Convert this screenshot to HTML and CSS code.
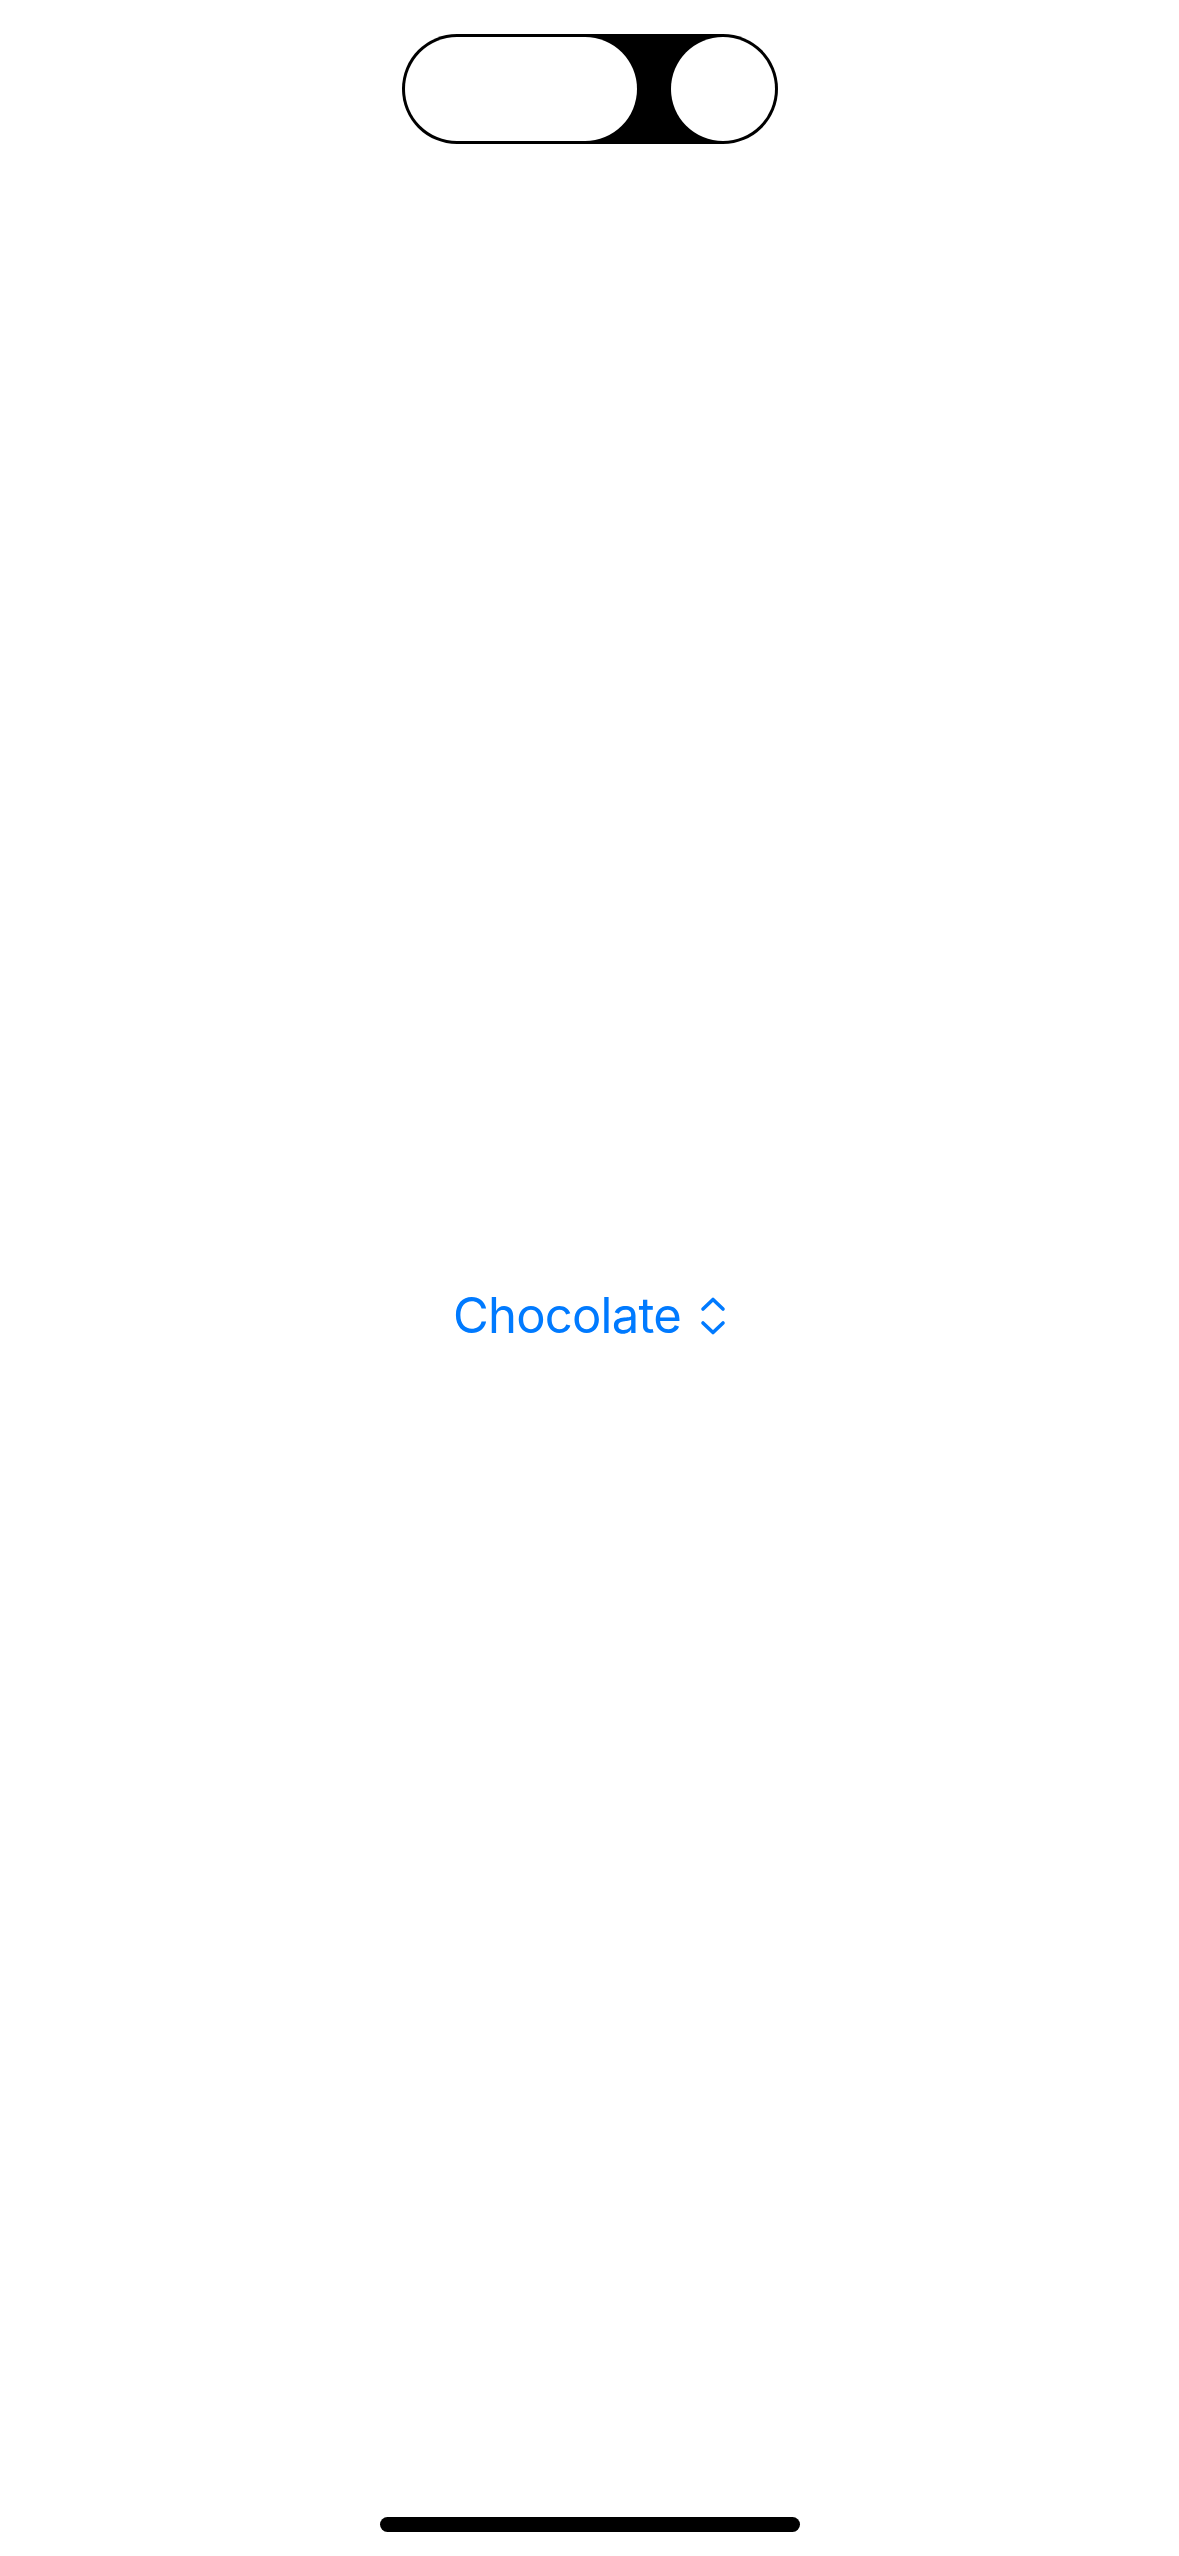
FILE: index.html
```html
<!DOCTYPE html>
<html lang="en">
<head>
<meta charset="utf-8">
<title>Picker</title>
<link rel="stylesheet" href="styles.css">
</head>
<body>
<div class="screen">
  <header class="top">
    <div class="island">
      <div class="island-pill"></div>
      <div class="island-dot"></div>
    </div>
  </header>
  <main class="content">
    <button class="picker" type="button">
      <span class="picker-label">Chocolate</span>
      <svg class="picker-icon" width="26" height="38" viewBox="0 0 26 38" aria-hidden="true">
        <path d="M3 12 L13 2.5 L23 12" fill="none" stroke="#007AFF" stroke-width="3.6" stroke-linecap="round" stroke-linejoin="round"/>
        <path d="M3 26 L13 35.5 L23 26" fill="none" stroke="#007AFF" stroke-width="3.6" stroke-linecap="round" stroke-linejoin="round"/>
      </svg>
    </button>
  </main>
  <footer class="bottom">
    <div class="home-indicator"></div>
  </footer>
</div>
</body>
</html>
```
FILE: styles.css
```css
html, body {
  margin: 0;
  padding: 0;
  background: #ffffff;
}

.screen {
  width: 1179px;
  height: 2556px;
  display: flex;
  flex-direction: column;
  font-family: Inter, "Noto Sans", "Liberation Sans", sans-serif;
}

.top {
  height: 177px;
  display: flex;
  justify-content: center;
  align-items: flex-start;
  padding-top: 34px;
  box-sizing: border-box;
}

.island {
  width: 376px;
  height: 110px;
  box-sizing: border-box;
  padding: 3px;
  border-radius: 55px;
  background: #000000;
  display: flex;
  justify-content: space-between;
  align-items: center;
}

.island-pill {
  width: 232px;
  height: 104px;
  border-radius: 52px;
  background: #ffffff;
}

.island-dot {
  width: 104px;
  height: 104px;
  border-radius: 50%;
  background: #ffffff;
}

.content {
  flex: 1;
  display: flex;
  justify-content: center;
  align-items: center;
}

.picker {
  display: flex;
  align-items: center;
  gap: 19px;
  border: 0;
  background: transparent;
  padding: 0;
  color: #007AFF;
  font-family: inherit;
  font-size: 49px;
  font-weight: 400;
  letter-spacing: -0.8px;
  line-height: 1;
}

.picker-icon {
  display: block;
}

.bottom {
  height: 102px;
  display: flex;
  justify-content: center;
  align-items: flex-end;
  padding-bottom: 24px;
  box-sizing: border-box;
}

.home-indicator {
  width: 420px;
  height: 15px;
  border-radius: 8px;
  background: #000000;
}
```
